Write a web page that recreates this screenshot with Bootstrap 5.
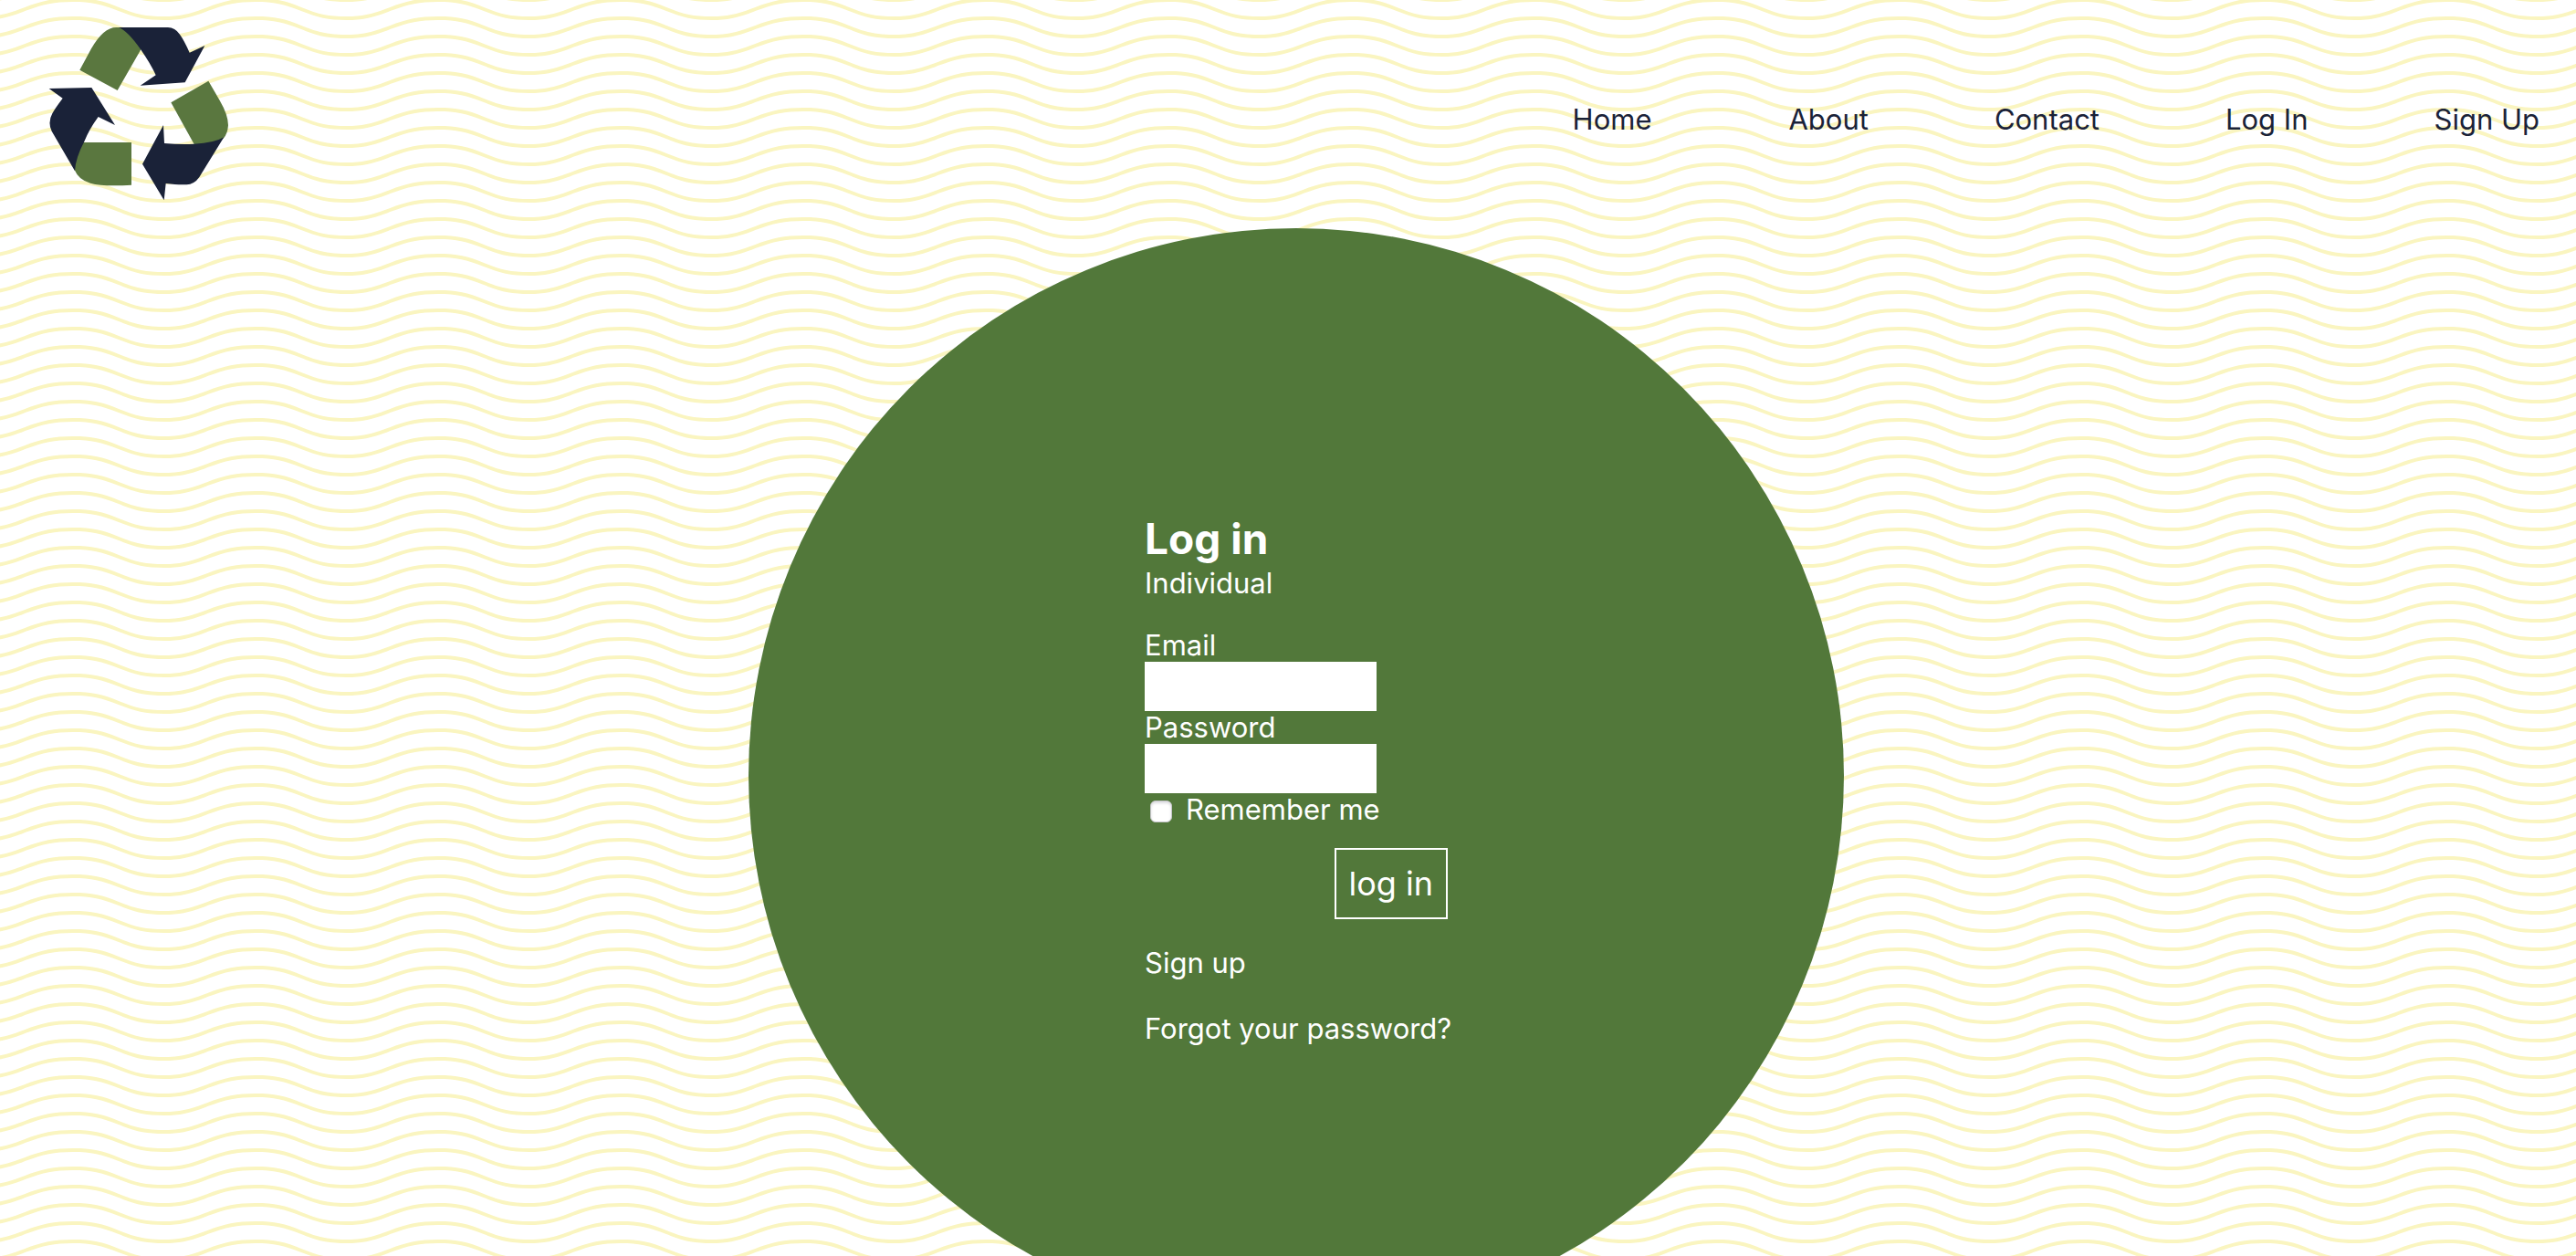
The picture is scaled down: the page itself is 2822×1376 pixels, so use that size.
<!DOCTYPE html>
<html lang="en">
<head>
<meta charset="utf-8">
<meta name="viewport" content="width=device-width, initial-scale=1">
<title>Log in</title>
<link href="https://cdn.jsdelivr.net/npm/bootstrap@5.3.0/dist/css/bootstrap.min.css" rel="stylesheet">
<style>
  :root { --navy: #1a2238; --leaf: #5a773f; --disc: #52783a; }
  body {
    min-height: 100vh;
    font-family: Inter, "Liberation Sans", sans-serif;
    font-size: 31px;
    line-height: 36px;
    background: #fff url("data:image/svg+xml,%3Csvg xmlns='http://www.w3.org/2000/svg' width='200' height='40' viewBox='0 0 100 20'%3E%3Cpath fill='%23faf5c0' d='M21.184 20c.357-.13.72-.264 1.088-.402l1.768-.661C33.64 15.347 39.647 14 50 14c10.271 0 15.362 1.222 24.629 4.928.955.383 1.869.74 2.75 1.072h6.225c-2.51-.73-5.139-1.691-8.233-2.928C65.888 13.278 60.562 12 50 12c-10.626 0-16.855 1.397-26.66 5.063l-1.767.662c-2.475.923-4.66 1.674-6.724 2.275h6.335zm0-20C13.258 2.892 8.077 4 0 4V2c5.744 0 9.951-.574 14.85-2h6.334zM77.38 0C85.239 2.966 90.502 4 100 4V2c-6.842 0-11.386-.542-16.396-2h-6.225zM0 14c8.44 0 13.718-1.21 22.272-4.402l1.768-.661C33.64 5.347 39.647 4 50 4c10.271 0 15.362 1.222 24.629 4.928C84.112 12.722 89.438 14 100 14v-2c-10.271 0-15.362-1.222-24.629-4.928C65.888 3.278 60.562 2 50 2 39.374 2 33.145 3.397 23.34 7.063l-1.767.662C13.223 10.84 8.163 12 0 12v2z'/%3E%3C/svg%3E") -20px -6px;
  }
  a { text-decoration: none; }
  .site-header { padding: 29px 40px 30px 53px; }
  .brand-logo { width: 198px; height: 191px; }
  .site-nav { gap: 138px; padding-top: 12px; }
  .site-nav a { color: var(--navy); }
  .site-nav li:first-child { margin-right: 12px; }
  .login-area { padding-left: 18px; height: calc(100vh - 250px); overflow: hidden; }
  .login-disc { width: 1200px; height: 1200px; background: var(--disc); color: #fff; }
  .login-disc a { color: #fff; }
  .login-title { font-size: 46px; line-height: 62px; }
  .login-box { width: 332px; padding-top: 4px; }
  .text-field { width: 254px; height: 54px; border: 0; background: #fff; padding: 4px 8px; }
  .remember-tick {
    appearance: none; width: 24px; height: 24px; margin: 4px 15px 0 6px; border-radius: 6px;
    background: #fff; border: 1px solid #c4c4c8; box-shadow: inset 0 2px 3px #dcdce0;
  }
  .remember-tick:checked { background: var(--navy); }
  .login-button {
    height: 78px; margin: 24px 0 30px; padding: 0 14px; border: 2px solid #fff;
    background: transparent; color: #fff; font-size: 36px;
  }
  .signup-link { margin-bottom: 36px; }
</style>
</head>
<body>
<header class="site-header d-flex justify-content-between align-items-center">
  <a href="#" aria-label="Home page" class="d-block lh-1">
    <svg class="brand-logo d-block" viewBox="159 87 594 573" aria-hidden="true">
      <g fill="#5a773f">
        <path d="M262 230 L300 160 Q340 90 382 90 L400 90 L470 155 L463 163 L386 297 Z"/>
        <path d="M562 337 L685 266 L722 330 Q750 378 750 412 Q748 440 735 454 L700 480 L638 474 Z"/>
        <path d="M270 468 H432 V608 Q340 614 297 602 Q258 590 246 560 L240 520 Z"/>
      </g>
      <g fill="#1a2238">
        <path d="M390 90 H552 Q575 90 591 113 Q606 134 623 173 L673 150 L608 271 L461 281 L512 247 Q496 211 462 162 Q420 102 390 90 Z"/>
        <path d="M161 291 L301 288 L378 411 L323 384 Q293 425 277 465 Q248 520 246 562 L170 431 Q156 402 172 373 Q180 357 206 323 Z"/>
        <path d="M537 411 L540 471 Q592 475 638 473 Q705 470 736 451 L662 571 Q648 599 625 605 Q600 610 545 603 L539 658 L468 539 Z"/>
      </g>
    </svg>
  </a>
  <nav aria-label="Main">
    <ul class="site-nav list-unstyled d-flex mb-0">
      <li><a href="#">Home</a></li>
      <li><a href="#">About</a></li>
      <li><a href="#">Contact</a></li>
      <li><a href="#">Log In</a></li>
      <li><a href="#">Sign Up</a></li>
    </ul>
  </nav>
</header>
<main class="login-area d-flex justify-content-center align-items-start">
  <section class="login-disc rounded-circle flex-shrink-0 d-flex justify-content-center align-items-center">
    <form class="login-box d-flex flex-column align-items-start">
      <h1 class="login-title fw-bold mb-0">Log in</h1>
      <p class="mb-0 pb-2">Individual</p>
      <label for="email" class="pt-4">Email</label>
      <input class="text-field" type="email" id="email">
      <label for="password">Password</label>
      <input class="text-field" type="password" id="password">
      <div class="d-flex align-items-center text-nowrap">
        <input class="remember-tick" type="checkbox" id="remember">
        <label for="remember">Remember me</label>
      </div>
      <button class="login-button align-self-end" type="submit">log in</button>
      <a class="signup-link" href="#">Sign up</a>
      <a class="text-nowrap" href="#">Forgot your password?</a>
    </form>
  </section>
</main>
<script src="https://cdn.jsdelivr.net/npm/bootstrap@5.3.0/dist/js/bootstrap.bundle.min.js"></script>
</body>
</html>
